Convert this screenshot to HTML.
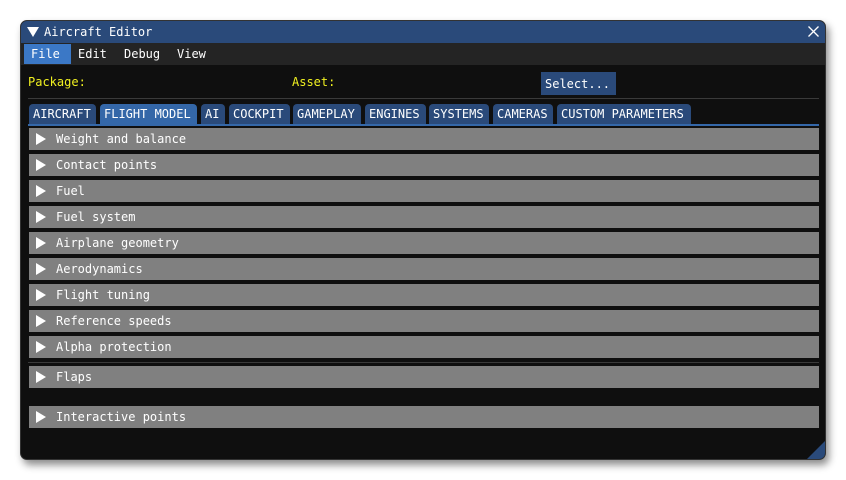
<!DOCTYPE html>
<html><head><style>
*{margin:0;padding:0;box-sizing:border-box}
body{width:846px;height:480px;background:#fff;position:relative;overflow:hidden;font-family:"DejaVu Sans Mono","Liberation Mono",monospace;font-size:12px;color:#fff}
.win{position:absolute;left:20px;top:20px;width:806px;height:440px;background:#0f0f0f;border-radius:7px;overflow:hidden;box-shadow:3px 5px 8px rgba(0,0,0,.45);border:1px solid #333}
.title{position:absolute;left:0;top:0;width:100%;height:22px;background:#2a4a7a;}
.title .t{position:absolute;left:23px;top:4px;font-size:12px}
.tri{position:absolute;left:6px;top:6px;width:0;height:0;border-left:6px solid transparent;border-right:6px solid transparent;border-top:10px solid #fff}
.menu{position:absolute;left:0;top:22px;width:100%;height:22px;background:#242424}
.menu span{position:absolute;top:4px}
.file{position:absolute;left:3px;top:1px;width:47px;height:20px;background:#3b78c6}
.y{color:#f0f020;position:absolute;top:54px}
.sel{position:absolute;left:520px;top:51px;width:75px;height:23px;background:#2a4a7a;padding:5px 4px}
.hr{position:absolute;left:7px;width:791px;height:1px;background:#3a3a3a}
.tab{position:absolute;top:83px;height:21px;background:#2a4a7a;border-radius:4px 4px 0 0;padding:3px 0 0 4px;white-space:nowrap}
.tab.a{background:#3467a8}
.tl{position:absolute;left:7px;top:103px;width:791px;height:1.5px;background:#3467a8}
.row{position:absolute;left:8px;width:790px;height:22px;background:#808080}
.row i{position:absolute;left:7px;top:5px;width:0;height:0;border-top:6px solid transparent;border-bottom:6px solid transparent;border-left:10px solid #fff}
.row span{position:absolute;left:27px;top:4px}
.grip{position:absolute;right:0;bottom:0;width:0;height:0;border-left:18px solid transparent;border-bottom:18px solid #2a4a7a}
</style></head><body>
<div class="win">
<div class="title"><div class="tri"></div><div class="t">Aircraft Editor</div>
<svg style="position:absolute;right:6px;top:5px" width="11" height="11"><path d="M0.5 0.5L10.5 10.5M10.5 0.5L0.5 10.5" stroke="#fff" stroke-width="1.3"/></svg></div>
<div class="menu"><div class="file"></div><span style="left:10px">File</span><span style="left:57px">Edit</span><span style="left:103px">Debug</span><span style="left:156px">View</span></div>
<div class="y" style="left:7px">Package:</div>
<div class="y" style="left:271px">Asset:</div>
<div class="sel">Select...</div>
<div class="hr" style="top:77px"></div>
<div class="tab" style="left:8px;width:67px">AIRCRAFT</div>
<div class="tab a" style="left:79px;width:97px">FLIGHT MODEL</div>
<div class="tab" style="left:180px;width:24px">AI</div>
<div class="tab" style="left:208px;width:61px">COCKPIT</div>
<div class="tab" style="left:272px;width:68px">GAMEPLAY</div>
<div class="tab" style="left:344px;width:61px">ENGINES</div>
<div class="tab" style="left:408px;width:60px">SYSTEMS</div>
<div class="tab" style="left:472px;width:60px">CAMERAS</div>
<div class="tab" style="left:536px;width:134px">CUSTOM PARAMETERS</div>
<div class="tl"></div>
<div class="row" style="top:107px"><i></i><span>Weight and balance</span></div>
<div class="row" style="top:133px"><i></i><span>Contact points</span></div>
<div class="row" style="top:159px"><i></i><span>Fuel</span></div>
<div class="row" style="top:185px"><i></i><span>Fuel system</span></div>
<div class="row" style="top:211px"><i></i><span>Airplane geometry</span></div>
<div class="row" style="top:237px"><i></i><span>Aerodynamics</span></div>
<div class="row" style="top:263px"><i></i><span>Flight tuning</span></div>
<div class="row" style="top:289px"><i></i><span>Reference speeds</span></div>
<div class="row" style="top:315px"><i></i><span>Alpha protection</span></div>
<div class="hr" style="top:341px"></div>
<div class="row" style="top:345px"><i></i><span>Flaps</span></div>
<div class="row" style="top:385px"><i></i><span>Interactive points</span></div>
<div class="grip"></div>
</div>
</body></html>
